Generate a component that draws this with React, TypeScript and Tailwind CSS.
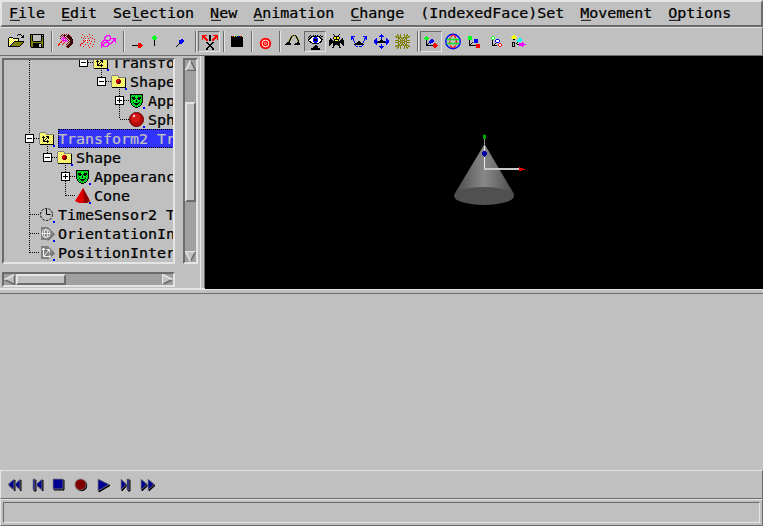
import React from "react";

const COLORS: Record<string, string> = {
  k: "#000000", w: "#ffffff", y: "#ffff00", Y: "#ffff90", o: "#808000", r: "#ff0000",
  R: "#b00000", d: "#780000", g: "#00ff20", G: "#00a020", b: "#0000ff", n: "#000080",
  m: "#ff00ff", c: "#00ffff", s: "#808080", l: "#e0e0e0", t: "#a0a0a0", u: "#f0e850",
};

/** Draws a sprite in which every character is one pixel. */
function Sprite({ rows, x = 0, y = 0 }: { rows: string[]; x?: number; y?: number }) {
  const paths: Record<string, string> = {};
  rows.forEach((row, j) => {
    [...row].forEach((ch, i) => {
      if (COLORS[ch]) paths[ch] = (paths[ch] || "") + `M${x + i} ${y + j}h1v1h-1z`;
    });
  });
  return (
    <g shapeRendering="crispEdges">
      {Object.entries(paths).map(([ch, d]) => <path key={ch} d={d} fill={COLORS[ch]} />)}
    </g>
  );
}

const OPEN = [
  "..........kkk...",
  ".........k...k.k",
  "..............kk",
  ".kkkk........kkk",
  "kywywkkkkkk.....",
  "kwywywywywk.....",
  "kywywywywyk.....",
  "kwywywkkkkkkkkkk",
  "kywywkoooooooook",
  "kwywkoooooooook.",
  "kywkoooooooook..",
  "kwkoooooooook...",
  "kkkkkkkkkkkk....",
];
const SAVE = [
  "kkkkkkkkkkkkkk",
  "kok........k.k",
  "kok........kkk",
  "kok........kok",
  "kok........kok",
  "kok........kok",
  "kok........kok",
  "kookkkkkkkkook",
  "kooooooooooook",
  "kookkkkkkkkook",
  "kookkkkkk..kok",
  "kookkkkkk..kok",
  "kookkkkkk..kok",
  ".kkkkkkkkkkkkk",
];
const SPOTS = [
  "....d.d.d.d....",
  "...d.dkd.dkd...",
  "..d.d.d.dkdkd..",
  "...m.mmd.dkdkd.",
  "..d.mmmmd.dkdk.",
  "...m.mwm.d.dkdk",
  "....rmmmm.d.dkd",
  "...r.m.m.m.dkdk",
  "..rr..r...d.dkd",
  ".r...r...d.dkdk",
  "rr..r...d.dkdk.",
  "r........dkdk..",
  "........dkdk...",
  ".........dk....",
];
const SPARKS = [
  "..r......r.....",
  "............r..",
  "....r..r.......",
  ".r........r....",
  "...r.r..r...r..",
  "......w.......r",
  "...r.rwr.r.....",
  "....r.w....r..r",
  "...r...r.......",
  ".rr.......r....",
  "r....r.......r.",
  "r.......r......",
  "...r........r..",
  ".........r.....",
];
const LOOP = [
  ".....mmmm......",
  "....mm..mm.....",
  "...mm....m.....",
  "...m.....mmmmmm",
  "...mm...mm..mmm",
  "..mmmmmmm...mmm",
  ".mm..mm....mm.m",
  "mm.mmmmm..mm..m",
  "m.mm...mmmm....",
  "mmm....mm......",
  "mmm...mm.......",
  "m.mmmmm........",
  "m..............",
];
const XAXIS = ["......rrr..", "......rrrr.", "kkkkkkrrrrr", "......rrrr.", "......rrr.."];
const YAXIS = ["..g..", ".ggg.", "ggggg", "ggggg", ".ggg.", "..k..", "..k..", "..k..", "..k..", "..k..", "..k.."];
const ZAXIS = [".....bb.", "...bbbbb", "...bbbbb", "...bbbb.", "...kbb..", "..k.....", ".k......", "k......."];
const SPLIT = [
  "rrrrr..kk..rrrrr",
  "rrr....kk....rrr",
  "rrrr...kk...rrrr",
  "r.rrr..kk..rrr.r",
  "r..rrr.kk.rrr..r",
  "....rr.kk.rr....",
  "................",
  "....kk....kk....",
  ".....kk..kk.....",
  "......kkkk......",
  ".......kk.......",
  "......kkkk......",
  ".....kk..kk.....",
  "....kk....kk....",
  "....kk....kk....",
];
const CLAP = [
  "krkykgkbkrky",
  "kkkkkkkkkkkk", "kkkkkkkkkkkk", "kkkkkkkkkkkk", "kkkkkkkkkkkk", "kkkkkkkkkkkk",
  "kkkkkkkkkkkk", "kkkkkkkkkkkk", "kkkkkkkkkkkk", "kkkkkkkkkkkk", "kkkkkkkkkkkk",
];
const HOPS = [
  ".......okok....",
  "......ko..ok...",
  ".....ok....ko..",
  ".....ko....ok..",
  "....ok......ko.",
  "....ko......ok.",
  "...ok........k.",
  "..kkk.......kk.",
  ".kkkkk....kkkkk",
  "kkkkkk...kkkkkk",
];
const EYE = [
  "..k..k.k.k..k..",
  ".k.kkkkkkkkk.kk",
  "k.kkwwbbbwwkk..",
  ".kkwwbbbbbwwkk.",
  "kkwwwbkkkbwwwkk",
  "kwwwwbkkkbwwwk.",
  ".kkwwbbbbbwwkk.",
  "..kkwwbbbwwkk..",
  "....kkkkkkk....",
  "...............",
  ".......kk......",
  "......kkkk.....",
  ".....kkkkk.....",
  "...kkkkkkkkk...",
  "...kkkkkkkkk...",
];
const BAT = [
  "....k.....k....",
  ".....k...k.....",
  ".....kkkkk.....",
  "....kyykyyk....",
  ".k..kyykyyk..k.",
  ".kk..kkkkk..kk.",
  "kkkk.kyyyk.kkkk",
  "kkkkkkkkkkkkkkk",
  "kkkkkkkkkkkkkkk",
  "kkk.kkkkkkk.kkk",
  "kk..kkkkkkk..kk",
  "k...kk...kk...k",
  "....k.....k....",
  "...kk.....kk...",
];
const SWING = [
  "bbbb........bbbb",
  "bb............bb",
  "bbb..........bbb",
  "b.b..........b.b",
  "..b..........b..",
  "...b...kk...b...",
  "...b..kkkk..b...",
  "....kkkkkkkk....",
  "...kkkkkkkkkk...",
  "....b......b....",
  ".....bb.bbb.....",
];
const PAN = [
  ".......b.......",
  "......bbb......",
  ".....bbbbb.....",
  ".......b.......",
  "..b....b....b..",
  ".bb....k....bb.",
  "bbb...kkk...bbb",
  "bbbbkkkkkkkbbbb",
  "bbbkkkkkkkkkbbb",
  ".bb.........bb.",
  "..b....b....b..",
  ".......b.......",
  ".....bbbbb.....",
  "......bbb......",
  ".......b.......",
];
const WEB = [
  "..o..o...o..o..",
  "..oo.o...o.oo..",
  "oo.o.o...o.o.oo",
  ".oooooo.oooooo.",
  "...oo.ooo.oo...",
  "...o.o.o.o.o...",
  "oooo.ooooo.oooo",
  "...ooo.o.ooo...",
  "oooo.ooooo.oooo",
  "...o.o.o.o.o...",
  "...oo.ooo.oo...",
  ".oooooo.oooooo.",
  "oo.o.o...o.o.oo",
  "..oo.o...o.oo..",
  "..o..o...o..o..",
];
const MOVE = [
  "..g...........",
  ".ggg..........",
  "ggggg.........",
  ".ggg...bb.....",
  "..k...bbbb....",
  "..k..bbbbb....",
  "..k..bbbb.....",
  "..k.k.b...rr..",
  "..kk.....rrrr.",
  "..kkkkkkkrrrrr",
  ".........rrrr.",
  "..........rr..",
];
const SCALE = [
  "gggg........",
  "gggg........",
  "gggg........",
  "gggg..bbbb..",
  ".k....bbbb..",
  ".k....bbbb..",
  ".k..k.bbbb..",
  ".k.k........",
  ".kk.....rrrr",
  ".kkkkkkkrrrr",
  "........rrrr",
  "........rrrr",
];
const CENTER = [
  ".gg.........",
  "gwwg........",
  "gwwg........",
  ".gg..bbb....",
  ".k..bwwwb...",
  ".k..bwwwb...",
  ".k...bbb....",
  ".k..k...rr..",
  ".k.k...rwwr.",
  ".kkkkk.rwwr.",
  "........rr..",
];
const ORIGIN = [
  "..yy...........",
  ".yyyy..........",
  "yyyyyy.........",
  ".yyyy...cc.....",
  "..kk...cccc....",
  "......ccccc....",
  "......cccc.....",
  ".kkk..k....m...",
  ".k.k.k..mmmmm..",
  ".k.k..kkmmmmmmm",
  ".k.k....mmmmm..",
  ".kkk.......m...",
];

function Tool({ children, pressed = false }: { children?: React.ReactNode; pressed?: boolean }) {
  return (
    <div className={"relative h-[21px] w-[22px] shrink-0 " + (pressed ? "border border-t-[#6b6b6b] border-l-[#6b6b6b] border-r-[#e4e4e4] border-b-[#e4e4e4] bg-[#b8b8b8]" : "")}>
      <svg className={"block h-[21px] w-[22px] max-w-none " + (pressed ? "-mt-px -ml-px" : "")} viewBox="0 0 22 21">{children}</svg>
    </div>
  );
}

const Divider = () => (
  <div className="mr-px ml-[3px] h-[21px] w-[2px] shrink-0 border-r border-l border-r-[#e4e4e4] border-l-[#6b6b6b]" />
);

const MENUS = [
  ["", "F", "ile"], ["", "E", "dit"], ["Se", "l", "ection"], ["", "N", "ew"], ["", "A", "nimation"],
  ["", "C", "hange"], ["(IndexedFace)Set", "", ""], ["", "M", "ovement"], ["", "O", "ptions"],
];

function MenuBar() {
  return (
    <div className="flex h-[27px] shrink-0 gap-4 border-2 border-t-[#e4e4e4] border-r-[#6b6b6b] border-b-[#6b6b6b] border-l-[#e4e4e4] pl-[7px] leading-[23px]">
      {MENUS.map(([a, key, z]) => (
        <div key={a + key + z} className="origin-[0_16px] scale-y-[0.92] whitespace-pre">
          {a}
          {key && <span className="relative after:absolute after:top-[16px] after:left-px after:h-[1.100px] after:w-[10px] after:bg-black">{key}</span>}
          {z}
        </div>
      ))}
    </div>
  );
}

function ToolBar() {
  return (
    <div className="flex h-[29px] shrink-0 border-t border-r border-b border-t-[#e4e4e4] border-r-[#6b6b6b] border-b-[#6b6b6b] pt-[3px] pl-1">
      <Tool><Sprite rows={OPEN} x={4} y={3} /></Tool>
      <Tool><Sprite rows={SAVE} x={4} y={3} /></Tool>
      <Divider />
      <Tool><Sprite rows={SPOTS} x={4} y={3} /></Tool>
      <Tool><Sprite rows={SPARKS} x={4} y={3} /></Tool>
      <Tool><Sprite rows={LOOP} x={3} y={4} /></Tool>
      <Divider />
      <Tool><Sprite rows={XAXIS} x={6} y={12} /></Tool>
      <Tool><Sprite rows={YAXIS} x={4} y={4} /></Tool>
      <Tool><Sprite rows={ZAXIS} x={6} y={8} /></Tool>
      <Divider />
      <Tool pressed><Sprite rows={SPLIT} x={4} y={4} /></Tool>
      <Divider />
      <Tool><Sprite rows={CLAP} x={5} y={5} /></Tool>
      <Divider />
      <Tool>
        <circle cx="11.5" cy="12.5" r="5.7" fill="#f00" />
        <circle cx="11.5" cy="12.5" r="3.4" fill="none" stroke="#fff" />
        <circle cx="11.5" cy="12.5" r="1.3" fill="#fff" />
        <circle cx="11.5" cy="12.5" r=".8" fill="#f00" />
      </Tool>
      <Divider />
      <Tool><Sprite rows={HOPS} x={3} y={4} /></Tool>
      <Tool pressed><Sprite rows={EYE} x={4} y={4} /></Tool>
      <Tool><Sprite rows={BAT} x={3} y={3} /></Tool>
      <Tool><Sprite rows={SWING} x={3} y={5} /></Tool>
      <Tool><Sprite rows={PAN} x={4} y={3} /></Tool>
      <Tool><Sprite rows={WEB} x={3} y={3} /></Tool>
      <Divider />
      <Tool pressed><Sprite rows={MOVE} x={4} y={5} /></Tool>
      <Tool>
        <g fill="none" strokeWidth="1.3">
          <circle cx="11" cy="10.5" r="7.2" stroke="#00f" strokeWidth="1.4" />
          <ellipse cx="11" cy="10.5" rx="3.3" ry="6.3" stroke="#f00" strokeDasharray="3 1" />
          <path d="M4.500 8.500h13M4.500 12.500h13" stroke="#0e2" />
        </g>
      </Tool>
      <Tool><Sprite rows={SCALE} x={4} y={5} /></Tool>
      <Tool><Sprite rows={CENTER} x={5} y={5} /></Tool>
      <Tool><Sprite rows={ORIGIN} x={3} y={4} /></Tool>
    </div>
  );
}

const FOLDER = [
  ".ssssss........",
  "sYuYuYus.......",
  "suYuYuYssssssss",
  "sYuYuYuYuYuYuYk",
  "suYuYuYuYuYuYuk",
  "sYuYuYuYuYuYuYk",
  "suYuYuYuYuYuYuk",
  "sYuYuYuYuYuYuYk",
  "suYuYuYuYuYuYuk",
  "sYuYuYuYuYuYuYk",
  "suYuYuYuYuYuYuk",
  "sYuYuYuYuYuYuYk",
  ".kkkkkkkkkkkkkk",
];
const AXES = ["..k..kkk", ".kkk..kk", "..k..k.k", "..k.k...", "..kk..k.", "..kkkkkk", "......k."];
const BALL = [".RRR.", "RrrdR", "RrRdd", "RRddd", ".ddd."];
const MASK = [
  "kkkkkkkkkkkkk",
  "kGgGgGgGgGgGk",
  "kgGgGgggGgGgk",
  "kGkkkgggkkkGk",
  "kgkkkkgkkkkgk",
  "kGgkkgGgkkgGk",
  "kgGgggkgggGgk",
  "kGgGgGkGgGgGk",
  "kggkggggGkgGk",
  ".kGgkkkkkgGk.",
  ".kgGgkkkgGgk.",
  "..kgGgGgGgk..",
  "...kkgGgkk...",
  ".....kkk.....",
];

function NodeIcon({ kind }: { kind: string }) {
  return (
    <svg className="block h-[19px] w-[19px] shrink-0" viewBox="0 0 19 19">
      {(kind === "transform" || kind === "shape") && <Sprite rows={FOLDER} x={0} y={3} />}
      {kind === "transform" && <Sprite rows={AXES} x={2} y={7} />}
      {kind === "shape" && <Sprite rows={BALL} x={5} y={7} />}
      {kind === "appearance" && <Sprite rows={MASK} x={1} y={3} />}
      {kind === "sphere" && (
        <>
          <circle cx="7.5" cy="9.5" r="7" fill="#b80808" stroke="#600" />
          <circle cx="6.500" cy="8" r="4.500" fill="#d51a1a" />
          <circle cx="5" cy="6" r="1.2" fill="#fcc" />
        </>
      )}
      {kind === "cone" && (
        <>
          <path d="M8 2L0 15l4 2h7l4-2z" fill="#e00000" />
          <path d="M8 2l1 15h3l3-2z" fill="#900000" />
        </>
      )}
      {kind === "clock" && (
        <g fill="none" stroke="#000">
          <circle cx="7.5" cy="9.5" r="6" strokeDasharray="2.4 1.3" />
          <path d="M7.5 4v5.500h4" />
        </g>
      )}
      {(kind === "orient" || kind === "position") && (
        <>
          <path d="M2 3h7l6.500 6.500L9 16H2z" fill="#808080" />
          <path d="M9 16.500l6.500-6.500" stroke="#404040" />
          {kind === "orient" ? (
            <g fill="none" stroke="#fff" strokeWidth=".8">
              <circle cx="7" cy="9.500" r="4" /><ellipse cx="7" cy="9.500" rx="1.700" ry="4" /><path d="M3 9.500h8" />
            </g>
          ) : (
            <path d="M4.500 5v8.500h7M3 7L4.500 5 6 7M5 13l5-6M7.500 6.500h3v3M10 11.500l1.500 2-1.500 2" fill="none" stroke="#fff" strokeWidth=".9" />
          )}
        </>
      )}
      <path d="M14 16h2v2h-2z" fill="#00f" shapeRendering="crispEdges" />
    </svg>
  );
}

type TreeNode = { level: number; kind: string; label: string; box?: "+" | "-"; selected?: boolean };
const NODES: TreeNode[] = [
  { level: 3, kind: "transform", label: "Transform", box: "-" },
  { level: 4, kind: "shape", label: "Shape", box: "-" },
  { level: 5, kind: "appearance", label: "Appearance", box: "+" },
  { level: 5, kind: "sphere", label: "Sphere" },
  { level: 0, kind: "transform", label: "Transform2 Transform", box: "-", selected: true },
  { level: 1, kind: "shape", label: "Shape", box: "-" },
  { level: 2, kind: "appearance", label: "Appearance", box: "+" },
  { level: 2, kind: "cone", label: "Cone" },
  { level: 0, kind: "clock", label: "TimeSensor2 TimeSensor" },
  { level: 0, kind: "orient", label: "OrientationInterpolator" },
  { level: 0, kind: "position", label: "PositionInterpolator" },
];

function TreeRow({ node }: { node: TreeNode }) {
  return (
    <div className="flex h-[19px]">
      <div className="shrink-0" style={{ width: 21 + node.level * 18 }} />
      <div className="w-[14px] shrink-0 pt-[5px]">
        {node.box && (
          <svg className="block h-[9px] w-[9px]" viewBox="0 0 9 9" shapeRendering="crispEdges">
            <rect x=".5" y=".5" width="8" height="8" fill="#fff" stroke="#000" />
            <path d={node.box === "+" ? "M2 4.500h5M4.500 2v5" : "M2 4.500h5"} stroke="#000" />
          </svg>
        )}
      </div>
      <NodeIcon kind={node.kind} />
      <div className={"grow whitespace-pre " + (node.selected ? "bg-[#3333ff] text-[#c0c0c0] outline-1 -outline-offset-1 outline-dotted outline-black" : "")}>
        <div className="h-[19px] origin-[0_15px] scale-y-[0.92] leading-[21px]">{node.label}</div>
      </div>
    </div>
  );
}

function Tree() {
  return (
    <div className="h-[206px] w-[173px] overflow-hidden border-2 border-t-[#6b6b6b] border-r-[#e4e4e4] border-b-[#e4e4e4] border-l-[#6b6b6b]">
      <div className="relative -mt-[7px] w-[300px]">
        <svg className="absolute top-0 left-0 h-[209px] w-[169px]" viewBox="0 0 169 209" shapeRendering="crispEdges">
          <path
            d="M25.500 7v193M26 161.500h10M26 180.500h10M26 199.500h10M30 85.500h6M43.500 93v10M48 104.500h6M61.500 112v31M66 123.500h6M62 142.500h10M84 9.500h6M97.500 17v7M102 28.500h6M115.500 36v30M120 47.500h6M116 66.500h10"
            fill="none" stroke="#000" strokeDasharray="1 1"
          />
        </svg>
        <div className="relative">{NODES.map((n, i) => <TreeRow key={i} node={n} />)}</div>
      </div>
    </div>
  );
}

const raised = "border-2 border-t-[#e4e4e4] border-l-[#e4e4e4] border-r-[#6b6b6b] border-b-[#6b6b6b] bg-[#c0c0c0]";
const trough = "border-2 border-t-[#6b6b6b] border-l-[#6b6b6b] border-r-[#e4e4e4] border-b-[#e4e4e4] bg-[#a0a0a0]";

function Arrow({ dir }: { dir: "up" | "down" | "left" | "right" }) {
  const shape = {
    up: ["M5.500 0L11 11H0z", "M5.500 .5L.5 10.500", "M5.500 .5L10.500 10.500H.5"],
    down: ["M5.500 11L0 0h11z", "M5.500 10.500L.5 .5h10", "M10.500 .5L5.500 10.500"],
    left: ["M0 5.500L11 0v11z", "M.5 5.500L10.500 .5", "M10.500 .5v10L.5 5.500"],
    right: ["M11 5.500L0 0v11z", "M.5 10.500V.5l10 5", "M10.500 5.500L.5 10.500"],
  }[dir];
  return (
    <svg className="block h-[11px] w-[11px] shrink-0" viewBox="0 0 11 11" fill="none" strokeWidth="1.500">
      <path d={shape[0]} fill="#c0c0c0" />
      <path d={shape[2]} stroke="#6b6b6b" />
      <path d={shape[1]} stroke="#e4e4e4" />
    </svg>
  );
}

function SidePane() {
  return (
    <div className="flex w-[205px] shrink-0 border-b border-[#e4e4e4]">
      <div className="flex w-[200px] flex-col gap-2 pt-[2px] pl-[2px]">
        <div className="flex gap-2">
          <Tree />
          <div className={"flex h-[206px] w-[15px] flex-col " + trough}>
            <Arrow dir="up" />
            <div className={"mt-[31px] h-[100px] " + raised} />
            <div className="grow" />
            <Arrow dir="down" />
          </div>
        </div>
        <div className={"flex h-[15px] w-[173px] " + trough}>
          <Arrow dir="left" />
          <div className={"ml-px w-[50px] " + raised} />
          <div className="grow" />
          <Arrow dir="right" />
        </div>
      </div>
      <div className="w-[5px] border-r border-l border-r-[#6b6b6b] border-l-[#e4e4e4]" />
    </div>
  );
}

function Viewport() {
  return (
    <div className="grow bg-black pt-[74px] pl-[245px]">
      <svg className="block h-[80px] w-[90px]" viewBox="0 0 90 80">
        <defs>
          <linearGradient id="cone">
            <stop offset="0" stopColor="#484848" /><stop offset=".3" stopColor="#707070" />
            <stop offset=".5" stopColor="#888" /><stop offset=".7" stopColor="#707070" /><stop offset="1" stopColor="#484848" />
          </linearGradient>
        </defs>
        <path d="M34.500 14L64 64a30 9 0 0 1-59.500 0z" fill="url(#cone)" />
        <ellipse cx="34" cy="66" rx="30" ry="9" fill="#505050" />
        <g shapeRendering="crispEdges">
          <path d="M34 7v9h1V7z" fill="#909090" />
          <path d="M34.500 16v23" stroke="#e8e8e8" />
          <path d="M34 39h36" stroke="#c8c8c8" strokeWidth="1.500" />
          <path d="M34 4h1l1 2v3h-3V6z" fill="#00a000" />
          <path d="M69 37l6 2.500-6 2z" fill="#e00000" />
          <path d="M33 21h3v1h1v3h-1v1h-1v1h-1v-1h-1v-1h-1v-3h1z" fill="#0000a0" />
        </g>
      </svg>
    </div>
  );
}

const TRANSPORT = [
  { left: 8, d: "M7 1v11L1 6.500zM13 1v11L8 6.500z" },
  { left: 33, d: "M1 1h2v11H1zM10 1v11L4 6.500z" },
  { left: 53, d: "M1 1h10v10H1z" },
  { left: 75, d: "" },
  { left: 98, d: "M1 1v12L12 6.500z" },
  { left: 121, d: "M1 1v11L6 6.500zM7 1h2v11H7z" },
  { left: 141, d: "M1 1v11L7 6.500zM8 1v11L14 6.500z" },
];

function Transport() {
  return (
    <div className="flex h-[29px] shrink-0 border border-t-[#e4e4e4] border-r-[#6b6b6b] border-b-[#6b6b6b] border-l-[#e4e4e4] pt-[7px]">
      {TRANSPORT.map(({ left, d }, i) => (
        <svg
          key={left}
          className="block h-[15px] shrink-0"
          style={{ width: (TRANSPORT[i + 1]?.left ?? 160) - left, marginLeft: i ? 0 : left - 2 }}
          viewBox={`0 0 ${(TRANSPORT[i + 1]?.left ?? 160) - left} 15`}
        >
          {d ? (
            <>
              <path d={d} transform="translate(1 1)" fill="#000" stroke="#000" />
              <path d={d} fill="#000090" stroke="#808080" strokeWidth=".8" />
            </>
          ) : (
            <>
              <circle cx="7.500" cy="7.500" r="5.700" fill="#000" />
              <circle cx="6.500" cy="6.500" r="5.500" fill="#800000" stroke="#808080" strokeWidth=".8" />
            </>
          )}
        </svg>
      ))}
    </div>
  );
}

export default function App() {
  return (
    <div className="flex h-[526px] w-[763px] flex-col overflow-hidden bg-[#c0c0c0] font-['DejaVu_Sans_Mono',monospace] text-[15px] tracking-[-0.030px] text-black [-webkit-text-stroke:0.25px]">
      <MenuBar />
      <ToolBar />
      <div className="flex h-[233px] shrink-0">
        <SidePane />
        <Viewport />
      </div>
      <div className="h-[5px] shrink-0 border-t border-b border-t-[#e4e4e4] border-b-[#6b6b6b]" />
      <div className="grow" />
      <Transport />
      <div className="h-[27px] shrink-0 border border-t-[#e4e4e4] border-r-[#6b6b6b] border-b-[#6b6b6b] border-l-[#e4e4e4] pt-[2px] pr-[2px] pb-[2px] pl-[2px]">
        <div className="h-[21px] border border-t-[#6b6b6b] border-r-[#e4e4e4] border-b-[#e4e4e4] border-l-[#6b6b6b]" />
      </div>
    </div>
  );
}
